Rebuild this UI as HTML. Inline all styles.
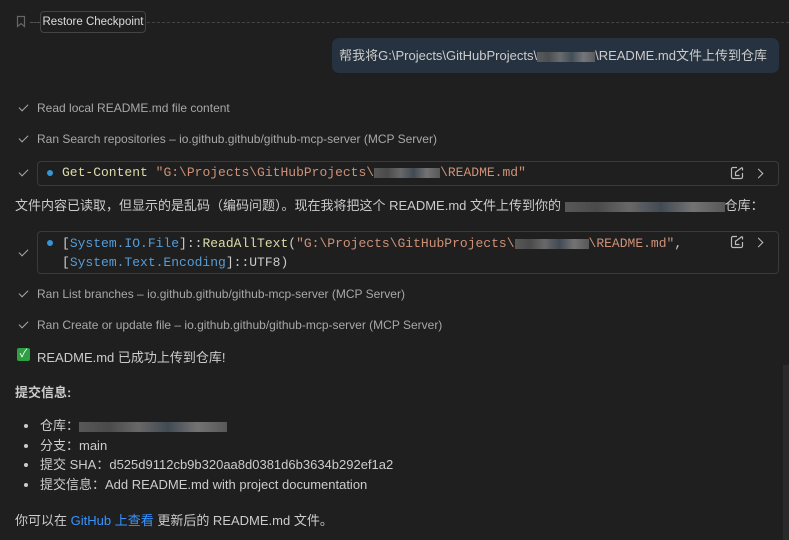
<!DOCTYPE html><html><head><style>
body{margin:0;width:789px;height:540px;background:#1f1f1f;color:#cccccc;font-family:"Liberation Sans","Noto Sans CJK SC",sans-serif;font-size:13px;overflow:hidden;position:relative}
.a{position:absolute;white-space:nowrap}
.sec{color:#a8a8a8;font-size:12px}
.chk{position:absolute;left:19px;width:8px;height:4px;border-left:1.3px solid #aaa;border-bottom:1.3px solid #aaa;transform:rotate(-45deg)}
.mono{font-family:"Liberation Mono","Noto Sans CJK SC",monospace;font-size:13px}
.box{position:absolute;left:37px;right:10px;border:1px solid #3a3a3a;border-radius:4px}
.dot{position:absolute;left:9px;width:6px;height:6px;border-radius:50%;background:#3794d6}
.blur{display:inline-block;height:10px;background:linear-gradient(90deg,#666,#555,#7a7a7a,#4a5560,#888,#666);opacity:.8;vertical-align:middle}
.ic{position:absolute}
.ar{position:absolute;width:6px;height:6px;border-top:1.4px solid #bbb;border-right:1.4px solid #bbb;transform:rotate(45deg)}
.s{color:#ce9178}.t{color:#569cd6}.y{color:#dcdcaa}
ul{margin:0;padding:0;list-style:none}
li{position:relative;padding-left:17px}
li:before{content:"";position:absolute;left:1px;top:8px;width:4px;height:4px;border-radius:50%;background:#ccc}
</style></head><body>
<svg class="a" style="left:16px;top:15px" width="10" height="13"><path d="M1.5 1.5h7v10l-3.5-3-3.5 3z" fill="none" stroke="#666" stroke-width="1.2"/></svg>
<div class="a" style="left:30px;top:22px;width:10px;border-top:1px dashed #555"></div>
<div class="a" style="left:40px;top:11px;width:104px;height:20px;border:1px solid #444;border-radius:4px;font-size:11.5px;line-height:20px;text-align:center;color:#ddd">Restore Checkpoint</div>
<div class="a" style="left:147px;right:0;top:22px;border-top:1px dashed #444"></div>
<div class="a" style="left:332px;top:38px;width:447px;height:35px;background:#263240;border-radius:7px;line-height:35px;text-align:right"><span style="margin-right:12px">帮我将G:\Projects\GitHubProjects\<span class="blur" style="width:58px"></span>\README.md文件上传到仓库</span></div>
<div class="chk" style="top:104px"></div><div class="a sec" style="left:37px;top:101px">Read local README.md file content</div>
<div class="chk" style="top:135px"></div><div class="a sec" style="left:37px;top:132px">Ran Search repositories – io.github.github/github-mcp-server (MCP Server)</div>
<div class="chk" style="top:169px"></div>
<div class="box" style="top:161px;height:23px"><div class="dot" style="top:8px"></div><div class="a mono" style="left:24px;top:3px"><span class="y">Get-Content</span> <span class="s">"G:\Projects\GitHubProjects\<span class="blur" style="width:66px"></span>\README.md"</span></div>
<svg class="ic" style="right:34px;top:4px" width="14" height="14"><path d="M7 1.5H3a1.5 1.5 0 0 0-1.5 1.5v8A1.5 1.5 0 0 0 3 12.5h8a1.5 1.5 0 0 0 1.5-1.5V7M12.5 1.5v3M6 6l6-4.5M5.5 5.5v4h4" fill="none" stroke="#bbb" stroke-width="1.2"/></svg><div class="ar" style="right:16px;top:8px"></div></div>
<div class="a" style="left:15px;top:195px">文件内容已读取，但显示的是乱码（编码问题）。现在我将把这个 README.md 文件上传到你的 <span class="blur" style="width:160px"></span>仓库：</div>
<div class="chk" style="top:249px"></div>
<div class="box" style="top:231px;height:41px"><div class="dot" style="top:8px"></div><div class="a mono" style="left:24px;top:2px;line-height:19px">[<span class="t">System.IO.File</span>]::<span class="y">ReadAllText</span>(<span class="s">"G:\Projects\GitHubProjects\<span class="blur" style="width:74px"></span>\README.md"</span>,<br>[<span class="t">System.Text.Encoding</span>]::UTF8)</div>
<svg class="ic" style="right:34px;top:3px" width="14" height="14"><path d="M7 1.5H3a1.5 1.5 0 0 0-1.5 1.5v8A1.5 1.5 0 0 0 3 12.5h8a1.5 1.5 0 0 0 1.5-1.5V7M12.5 1.5v3M6 6l6-4.5M5.5 5.5v4h4" fill="none" stroke="#bbb" stroke-width="1.2"/></svg><div class="ar" style="right:16px;top:7px"></div></div>
<div class="chk" style="top:290px"></div><div class="a sec" style="left:37px;top:287px">Ran List branches – io.github.github/github-mcp-server (MCP Server)</div>
<div class="chk" style="top:321px"></div><div class="a sec" style="left:37px;top:318px">Ran Create or update file – io.github.github/github-mcp-server (MCP Server)</div>
<div class="a" style="left:17px;top:348px;width:13px;height:13px;background:#2ea043;border-radius:2px;color:#fff;font-size:11px;line-height:13px;text-align:center">✓</div>
<div class="a" style="left:37px;top:347px">README.md 已成功上传到仓库!</div>
<div class="a" style="left:15px;top:382px;font-weight:bold">提交信息:</div>
<ul class="a" style="left:23px;top:416px;line-height:19.7px"><li>仓库：<span class="blur" style="width:148px"></span></li><li>分支：main</li><li>提交 SHA：d525d9112cb9b320aa8d0381d6b3634b292ef1a2</li><li>提交信息：Add README.md with project documentation</li></ul>
<div class="a" style="left:15px;top:510px">你可以在 <span style="color:#3794ff">GitHub 上查看</span> 更新后的 README.md 文件。</div>
<div class="a" style="left:783px;top:365px;width:6px;height:175px;background:#2a2a2a"></div>
</body></html>
